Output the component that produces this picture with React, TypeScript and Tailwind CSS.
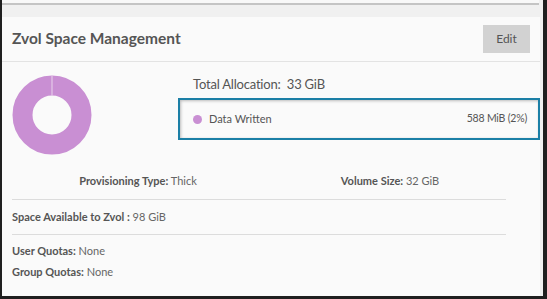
export default function App() {
  return (
    <div className="w-[547px] h-[299px] bg-[#1f1f1f] flex overflow-hidden" style={{ fontFamily: 'Lato, "Open Sans", sans-serif' }}>
      <div className="ml-[2px] w-[541px] h-[296px] bg-[#f0f0f0] flex flex-col">
        {/* previous card edge */}
        <div className="h-[5px] w-[537px] bg-[#f8f8f8] border-b-2 border-[#c4c4c4]" />
        <div className="h-[12px]" />

        {/* Card */}
        <div className="flex-1 w-[538px] bg-[#fafafa] flex flex-col">
          {/* Header */}
          <div className="h-[45px] flex items-center justify-between pl-[10px] pr-[10px] border-b border-[#e3e3e3]">
            <h2 className="text-[15.5px] font-bold text-[#555]">Zvol Space Management</h2>
            <button className="w-[47px] h-[28px] bg-[#d2d2d2] text-[12px] text-[#555]">Edit</button>
          </div>

          {/* Chart + legend */}
          <div className="flex h-[100px]">
            <div className="w-[176px] pl-[10px] pt-[13px]">
              <svg width="80" height="80" viewBox="0 0 80 80">
                <circle cx="40" cy="40" r="29.5" fill="none" stroke="#c98fd3" strokeWidth="20" />
                <line x1="40" y1="0.5" x2="40" y2="20.5" stroke="#e9d4ec" strokeWidth="1" />
              </svg>
            </div>
            <div className="flex-1 flex flex-col pt-[13px]">
              <div className="pl-[15px] text-[13px] tracking-[-0.2px] text-[#555] leading-[18px]">
                Total Allocation:&nbsp; 33 GiB
              </div>
              <div className="mt-[5px] h-[42px] border-2 border-[#1b7fa6] shadow-[inset_1px_1px_3px_rgba(0,0,0,0.25)] flex items-center justify-between pl-[13px] pr-[11px] text-[11px] text-[#555]">
                <div className="flex items-center gap-[7px]">
                  <span className="w-[9px] h-[9px] rounded-full bg-[#c98fd3]" />
                  <span>Data Written</span>
                </div>
                <span className="text-[10.5px] tracking-[-0.2px]">588 MiB (2%)</span>
              </div>
            </div>
          </div>

          {/* Details */}
          <div className="px-[10px] text-[11px] text-[#666]">
            <div className="grid grid-cols-2 h-[37px] items-center mr-[14px] pt-[2px]">
              <div className="text-center">
                <span className="font-bold text-[#555]">Provisioning Type:</span> Thick
              </div>
              <div className="text-center">
                <span className="font-bold text-[#555]">Volume Size:</span> 32 GiB
              </div>
            </div>
            <div className="mr-[24px] h-px bg-[#dcdcdc]" />
            <div className="h-[35px] flex items-center mr-[24px] border-b border-[#dcdcdc]">
              <span className="font-bold text-[#555]">Space Available to Zvol :</span>&nbsp;98 GiB
            </div>
            <div className="pt-[5px] leading-[21px]">
              <div>
                <span className="font-bold text-[#555]">User Quotas:</span> None
              </div>
              <div>
                <span className="font-bold text-[#555]">Group Quotas:</span> None
              </div>
            </div>
          </div>
        </div>
      </div>
    </div>
  )
}
